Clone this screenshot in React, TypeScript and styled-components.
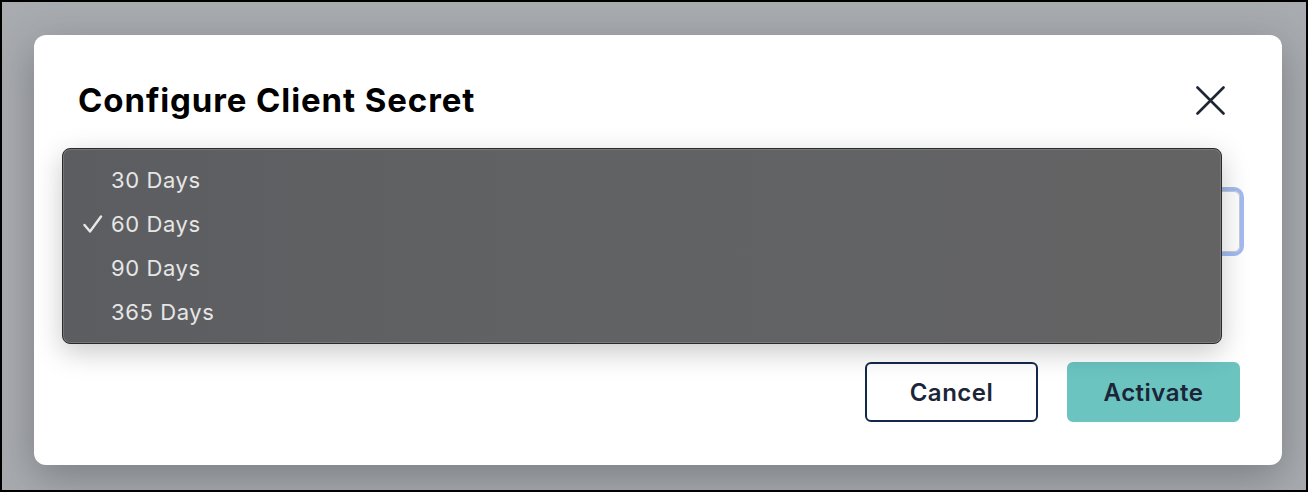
import React from "react";
import styled, { createGlobalStyle } from "styled-components";

const options = ["30 Days", "60 Days", "90 Days", "365 Days"];
const selected = "60 Days";

export default function App(): JSX.Element {
  return (
    <>
      <GlobalStyle />
      <Backdrop>
        <Modal>
          <Header>
            <Title>Configure Client Secret</Title>
            <CloseButton aria-label="Close">
              <svg width="29" height="29" viewBox="0 0 29 29" fill="none">
                <path d="M1.5 1.5L27.5 27.5M27.5 1.5L1.5 27.5" stroke="#1e2535" strokeWidth="2.6" strokeLinecap="round" />
              </svg>
            </CloseButton>
          </Header>
          <SelectBox aria-label="Expiration" />
          <Footer>
            <Button>Cancel</Button>
            <Button primary>Activate</Button>
          </Footer>
          <Menu>
            {options.map((o) => (
              <MenuItem key={o}>
                <Check>
                  {o === selected && (
                    <svg width="20" height="19" viewBox="0 0 20 19" fill="none">
                      <path d="M1.5 10L7 16.5L18 1.5" stroke="#e8e8e8" strokeWidth="2.4" strokeLinecap="round" strokeLinejoin="round" />
                    </svg>
                  )}
                </Check>
                {o}
              </MenuItem>
            ))}
          </Menu>
        </Modal>
      </Backdrop>
    </>
  );
}

const GlobalStyle = createGlobalStyle`
  html, body {
    margin: 0;
    padding: 0;
    height: 100%;
  }
  body {
    font-family: Inter, "Liberation Sans", sans-serif;
  }
  #root {
    height: 100%;
  }
  * {
    box-sizing: border-box;
  }
`;

const Backdrop = styled.div`
  width: 100%;
  height: 100%;
  border: 2px solid #000;
  background: #a8abaf;
  padding: 33px 24px 25px 32px;
  display: flex;
`;

const Modal = styled.div`
  position: relative;
  flex: 1;
  background: #fff;
  border-radius: 12px;
  box-shadow: 0 12px 40px rgba(40, 44, 52, 0.35);
  padding: 45px 42px 43px 42px;
  display: flex;
  flex-direction: column;
`;

const Header = styled.div`
  display: flex;
  align-items: center;
  justify-content: space-between;
  height: 40px;
`;

const Title = styled.h2`
  margin: 0 0 0 2px;
  font-size: 33px;
  font-weight: 700;
  color: #000;
  letter-spacing: 0.9px;
`;

const CloseButton = styled.button`
  width: 40px;
  height: 40px;
  margin-right: 10px;
  border: none;
  background: none;
  padding: 0;
  display: flex;
  align-items: center;
  justify-content: center;
`;

const SelectBox = styled.div`
  margin-top: 71px;
  height: 61px;
  border: 1px solid #c8cbd0;
  border-radius: 6px;
  box-shadow: 0 0 0 4px #a3bbf2;
`;

const Footer = styled.div`
  margin-top: auto;
  display: flex;
  justify-content: flex-end;
  gap: 29px;
`;

const Button = styled.button<{ primary?: boolean }>`
  width: 173px;
  height: 60px;
  border-radius: 6px;
  border: 2px solid ${(p) => (p.primary ? "#6bc4c0" : "#13294b")};
  background: ${(p) => (p.primary ? "#6bc4c0" : "#fff")};
  color: #1c2538;
  font-family: Inter, "Liberation Sans", sans-serif;
  font-size: 24px;
  font-weight: 600;
  letter-spacing: 0.5px;
`;

const Menu = styled.div`
  position: absolute;
  left: 28px;
  top: 113px;
  width: 1160px;
  height: 196px;
  padding: 9px 0 11px;
  border: 1px solid #2a2a2c;
  border-radius: 8px;
  background: linear-gradient(90deg, #5c5d60 0%, #616264 40%, #636364 100%);
  box-shadow: inset 0 0 0 1px rgba(255, 255, 255, 0.15), 0 8px 28px rgba(0, 0, 0, 0.22);
`;

const MenuItem = styled.div`
  height: 44px;
  display: flex;
  align-items: center;
  padding-left: 20px;
  font-size: 22px;
  letter-spacing: 0.6px;
  color: #e6e6e6;
`;

const Check = styled.span`
  width: 28px;
  display: flex;
  align-items: center;
`;
